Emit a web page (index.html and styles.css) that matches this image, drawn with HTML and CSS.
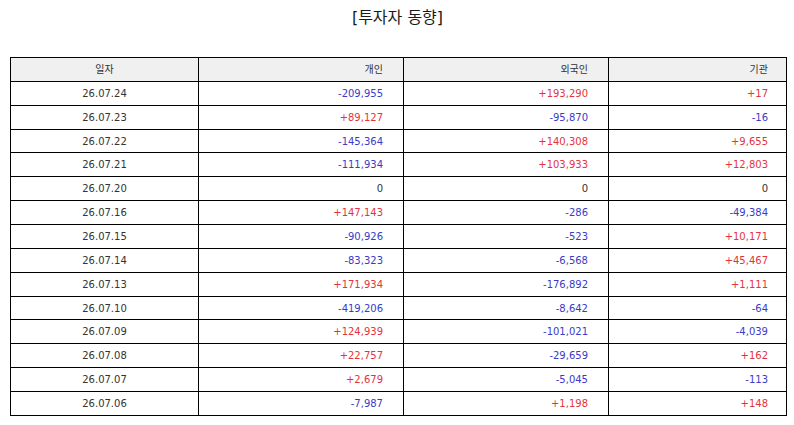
FILE: index.html
```html
<!DOCTYPE html>
<html lang="ko">
<head>
<meta charset="utf-8">
<link rel="stylesheet" href="styles.css">
</head>
<body>
<div class="page">
  <h1 class="title">[투자자 동향]</h1>
  <table class="grid">
    <colgroup>
      <col class="c-date"><col class="c-num"><col class="c-num"><col class="c-last">
    </colgroup>
    <thead>
      <tr><th class="date">일자</th><th>개인</th><th>외국인</th><th class="last">기관</th></tr>
    </thead>
    <tbody>
      <tr><td class="date">26.07.24</td><td class="neg">-209,955</td><td class="pos">+193,290</td><td class="last pos">+17</td></tr>
      <tr><td class="date">26.07.23</td><td class="pos">+89,127</td><td class="neg">-95,870</td><td class="last neg">-16</td></tr>
      <tr><td class="date">26.07.22</td><td class="neg">-145,364</td><td class="pos">+140,308</td><td class="last pos">+9,655</td></tr>
      <tr><td class="date">26.07.21</td><td class="neg">-111,934</td><td class="pos">+103,933</td><td class="last pos">+12,803</td></tr>
      <tr><td class="date">26.07.20</td><td>0</td><td>0</td><td class="last">0</td></tr>
      <tr><td class="date">26.07.16</td><td class="pos">+147,143</td><td class="neg">-286</td><td class="last neg">-49,384</td></tr>
      <tr><td class="date">26.07.15</td><td class="neg">-90,926</td><td class="neg">-523</td><td class="last pos">+10,171</td></tr>
      <tr><td class="date">26.07.14</td><td class="neg">-83,323</td><td class="neg">-6,568</td><td class="last pos">+45,467</td></tr>
      <tr><td class="date">26.07.13</td><td class="pos">+171,934</td><td class="neg">-176,892</td><td class="last pos">+1,111</td></tr>
      <tr><td class="date">26.07.10</td><td class="neg">-419,206</td><td class="neg">-8,642</td><td class="last neg">-64</td></tr>
      <tr><td class="date">26.07.09</td><td class="pos">+124,939</td><td class="neg">-101,021</td><td class="last neg">-4,039</td></tr>
      <tr><td class="date">26.07.08</td><td class="pos">+22,757</td><td class="neg">-29,659</td><td class="last pos">+162</td></tr>
      <tr><td class="date">26.07.07</td><td class="pos">+2,679</td><td class="neg">-5,045</td><td class="last neg">-113</td></tr>
      <tr><td class="date">26.07.06</td><td class="neg">-7,987</td><td class="pos">+1,198</td><td class="last pos">+148</td></tr>
    </tbody>
  </table>
</div>
</body>
</html>
```
FILE: styles.css
```css
html, body {
  margin: 0;
  padding: 0;
  background: #ffffff;
}
.page {
  padding: 0 9px 0 10px;
  font-family: "DejaVu Sans", "Noto Sans CJK KR", sans-serif;
  color: #333333;
}
.title {
  margin: 0;
  padding-top: 7px;
  height: 57px;
  box-sizing: border-box;
  text-align: center;
  font-size: 16px;
  font-weight: normal;
  line-height: 22px;
  color: #1a1a1a;
}
.grid {
  width: 776px;
  border-collapse: collapse;
  table-layout: fixed;
  font-size: 10px;
}
.c-date { width: 188px; }
.c-num { width: 205px; }
.c-last { width: 178px; }
.grid tr {
  height: 23.87px;
}
.grid th, .grid td {
  border: 1.5px solid #000000;
  padding: 1px 20px 0 0;
  text-align: right;
  font-weight: normal;
  line-height: 12px;
  white-space: nowrap;
}
.grid .last {
  padding-right: 18px;
}
.grid th {
  background: #f0f0f0;
}
.grid .date {
  text-align: center;
  padding: 1px 0 0 0;
}
.pos { color: #e23440; }
.neg { color: #3a3ac8; }
```
